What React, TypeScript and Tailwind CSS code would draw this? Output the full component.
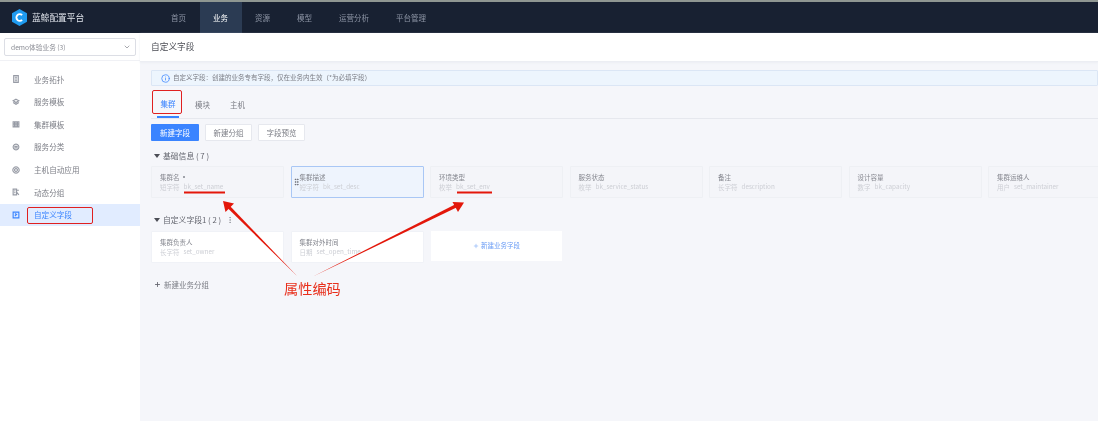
import { ChevronDown, Info, Plus, MoreVertical, GripVertical } from "lucide-react";

const navItems = ["首页", "业务", "资源", "模型", "运营分析", "平台管理"];

const sideItems = [
  { label: "业务拓扑", icon: "M3 1h8v12H3z M5 4h4 M5 7h4 M5 10h4" },
  { label: "服务模板", icon: "M7 2l5 3-5 3-5-3z M2 8l5 3 5-3" },
  { label: "集群模板", icon: "M2 3h10v9H2z M2 7h10 M7 3v9 M4.5 3v9 M9.5 3v9" },
  { label: "服务分类", icon: "M7 2a5 5 0 1 0 .01 0z M4 6h6 M4 8.5h6" },
  { label: "主机自动应用", icon: "M7 1.5a5.5 5.5 0 1 0 .01 0z M7 4.5a2.5 2.5 0 1 0 .01 0z" },
  { label: "动态分组", icon: "M2 2h6v10H2z M8 4h4 M8 7l4 5 M4 5h2 M4 8h2" },
  { label: "自定义字段", icon: "M2 2h10v10H2z M5 9l4-4 M5 5h2", active: true },
];

const baseFields = [
  { name: "集群名", required: true, type: "短字符", code: "bk_set_name" },
  { name: "集群描述", type: "短字符", code: "bk_set_desc", hover: true },
  { name: "环境类型", type: "枚举", code: "bk_set_env" },
  { name: "服务状态", type: "枚举", code: "bk_service_status" },
  { name: "备注", type: "长字符", code: "description" },
  { name: "设计容量", type: "数字", code: "bk_capacity" },
  { name: "集群运维人", type: "用户", code: "set_maintainer" },
];

const customFields = [
  { name: "集群负责人", type: "长字符", code: "set_owner" },
  { name: "集群对外时间", type: "日期", code: "set_open_time" },
];

type Field = { name: string; type: string; code: string; required?: boolean; hover?: boolean };

function FieldCard({ field, white }: { field: Field; white?: boolean }) {
  const look = field.hover
    ? "border-[#a9c7f5] bg-[#eef4fd]"
    : white
      ? "border-[#f0f2f7] bg-white h-[31px]"
      : "border-[#eef0f4] bg-[#f4f5f9]";
  return (
    <div className={`relative w-[133px] h-[32px] shrink-0 rounded-[1px] border pl-[8px] pt-[4px] leading-[10px] ${look}`}>
      {field.hover && <GripVertical className="absolute left-[0px] top-[10px] w-[9px] h-[10px] text-[#63656e]" />}
      <div className="flex items-center gap-[3px] text-[6.5px] h-[11px] text-[#85878f]">
        {field.name}
        {field.required && <span className="w-[2px] h-[2px] rounded-full bg-[#85878f]" />}
      </div>
      <div className="flex items-center gap-[4px] text-[6.5px] h-[10px] whitespace-nowrap text-[#cdcfd5]">
        <span>{field.type}</span>
        <span className="text-[6.3px]">{field.code}</span>
      </div>
    </div>
  );
}

function SectionTitle({ text, more }: { text: string; more?: boolean }) {
  return (
    <div className="flex items-center h-[12px] text-[7.8px] text-[#63656e]">
      <span className="w-0 h-0 ml-[3px] mr-[3px] border-x-[3px] border-x-transparent border-t-[4px] border-t-[#4b4d55]" />
      {text}
      {more && <MoreVertical className="ml-[5px] w-[8px] h-[8px] text-[#8a8c94]" />}
    </div>
  );
}

export default function App() {
  return (
    <div
      className="relative w-[1098px] h-[421px] overflow-hidden flex flex-col bg-[#f5f6fa] blur-[0.3px]"
      style={{ fontFamily: '"Noto Sans CJK SC", "Noto Sans", sans-serif' }}
    >
      <div className="h-[2px] shrink-0 bg-[#8f9792]" />

      {/* Top nav */}
      <header className="h-[31px] shrink-0 flex items-stretch bg-[#182132]">
        <div className="w-[157.5px] flex items-center pl-[12px] gap-[5px]">
          <svg viewBox="0 0 16 18" className="w-[15px] h-[17px]">
            <path d="M8 0l8 4.5v9L8 18l-8-4.5v-9z" fill="#1f9bf0" />
            <path d="M10.8 6.4A3.6 3.6 0 1 0 10.8 11.6" fill="none" stroke="#fff" strokeWidth="2" />
          </svg>
          <span className="text-[8.7px] text-[#dfe3ea]">蓝鲸配置平台</span>
        </div>
        <nav className="flex items-stretch text-[7.5px] text-[#8d95a5]">
          {navItems.map((item) => (
            <div
              key={item}
              className={`flex items-center justify-center px-[13.5px] ${item === "业务" ? "bg-[#2b3b53] text-white" : ""}`}
            >
              {item}
            </div>
          ))}
        </nav>
      </header>

      <div className="flex-1 flex min-h-0">
        {/* Sidebar */}
        <aside className="w-[140px] shrink-0 bg-white">
          <div className="h-[28px] px-[4px] pt-[5px] border-b border-[#f0f1f5]">
            <div className="h-[18px] rounded-[2px] border border-[#dcdee5] flex items-center justify-between pl-[6px] pr-[4px] text-[6.7px] text-[#8a8c94]">
              demo体验业务 (3)
              <ChevronDown className="w-[8px] h-[8px] text-[#7b7d85]" />
            </div>
          </div>
          <div className="pt-[7px]">
            {sideItems.map((item) => (
              <div
                key={item.label}
                className={`h-[22.6px] flex items-center pl-[12px] gap-[14px] text-[7.6px] ${item.active ? "bg-[#e1ecff] text-[#3a84ff]" : "text-[#7d7f87]"}`}
              >
                <svg viewBox="0 0 14 14" className={`w-[8px] h-[8px] ${item.active ? "text-[#3a84ff]" : "text-[#979ba5]"}`} fill="none" stroke="currentColor" strokeWidth="2">
                  <path d={item.icon} />
                </svg>
                {item.label}
              </div>
            ))}
          </div>
        </aside>

        {/* Main */}
        <main className="flex-1 min-w-0">
          <div className="h-[29px] bg-white flex items-center pl-[11px] text-[8.7px] text-[#4b4d55] border-b border-[#eceef3] shadow-[0_1px_2px_#eceef3]">
            自定义字段
          </div>
          <div className="pl-[11px]">
            <div className="mt-[8px] h-[16px] flex items-center gap-[3px] pl-[9px] rounded-[1px] border border-[#dbe6f5] bg-[#edf5fd] text-[6.5px] text-[#7b7d85]">
              <Info className="w-[9px] h-[9px] text-[#3a84ff]" />
              自定义字段：创建的业务专有字段，仅在业务内生效（*为必填字段）
            </div>

            <div className="mt-[5px] h-[28px] flex items-stretch border-b border-[#e6e8ee] text-[7.5px] text-[#7b7d85]">
              <div className="ml-[6px] w-[22px] flex items-center justify-center border-b-2 border-[#3a84ff] text-[#3a84ff]">集群</div>
              <div className="ml-[12px] px-[4px] flex items-center">模块</div>
              <div className="ml-[12px] px-[4px] flex items-center">主机</div>
            </div>

            <div className="mt-[5px] flex gap-[6px] text-[7.5px]">
              <button className="w-[48px] h-[17px] rounded-[1px] bg-[#3a84ff] text-white">新建字段</button>
              <button className="w-[47px] h-[17px] rounded-[1px] border border-[#e6e8ee] bg-white text-[#7b7d85]">新建分组</button>
              <button className="w-[47px] h-[17px] rounded-[1px] border border-[#e6e8ee] bg-white text-[#7b7d85]">字段预览</button>
            </div>

            <div className="mt-[9px]">
              <SectionTitle text="基础信息 ( 7 )" />
            </div>
            <div className="mt-[4px] flex gap-[6.5px]">
              {baseFields.map((f) => (
                <FieldCard key={f.code} field={f} />
              ))}
            </div>

            <div className="mt-[16px]">
              <SectionTitle text="自定义字段1 ( 2 )" more />
            </div>
            <div className="mt-[5px] flex gap-[6.5px]">
              {customFields.map((f) => (
                <FieldCard key={f.code} field={f} white />
              ))}
              <div className="w-[131px] h-[30px] ml-[1px] bg-white flex items-center justify-center gap-[2px] text-[6.5px] text-[#6a9cf5]">
                <Plus className="w-[6px] h-[6px]" />
                新建业务字段
              </div>
            </div>

            <div className="mt-[16px] ml-[3px] flex items-center gap-[3px] text-[7.5px] text-[#7b7d85]">
              <Plus className="w-[7px] h-[7px] text-[#63656e]" strokeWidth={3} />
              新建业务分组
            </div>
          </div>
        </main>
      </div>

      {/* Red annotations on top of the screenshot */}
      <div className="absolute left-[152px] top-[90px] w-[30px] h-[24px] border-[1.5px] border-[#e02020] rounded-[2px]" />
      <div className="absolute left-[27px] top-[207px] w-[66px] h-[17px] border-[1.5px] border-[#e02020] rounded-[2px]" />
      <svg className="absolute left-0 top-0 w-[1098px] h-[421px] pointer-events-none" viewBox="0 0 1098 421" fill="none">
        <path d="M184 192.5h41" stroke="#e3170a" strokeWidth="2" />
        <path d="M457 192.5h35" stroke="#e3170a" strokeWidth="2" />
        <path d="M298 277L229.5 205.5L227.3 207.7z" fill="#e3170a" />
        <path d="M223 201l2.5 11 8.5-8.5z" fill="#e3170a" />
        <path d="M313 276.5L456.5 207.5L455 204.5z" fill="#e3170a" />
        <path d="M464 202.5l-11.5-.5 5.5 10z" fill="#e3170a" />
      </svg>
      <div className="absolute left-[284px] top-[278px] text-[14.2px] leading-[20px] text-[#e8301c]">属性编码</div>
    </div>
  );
}
